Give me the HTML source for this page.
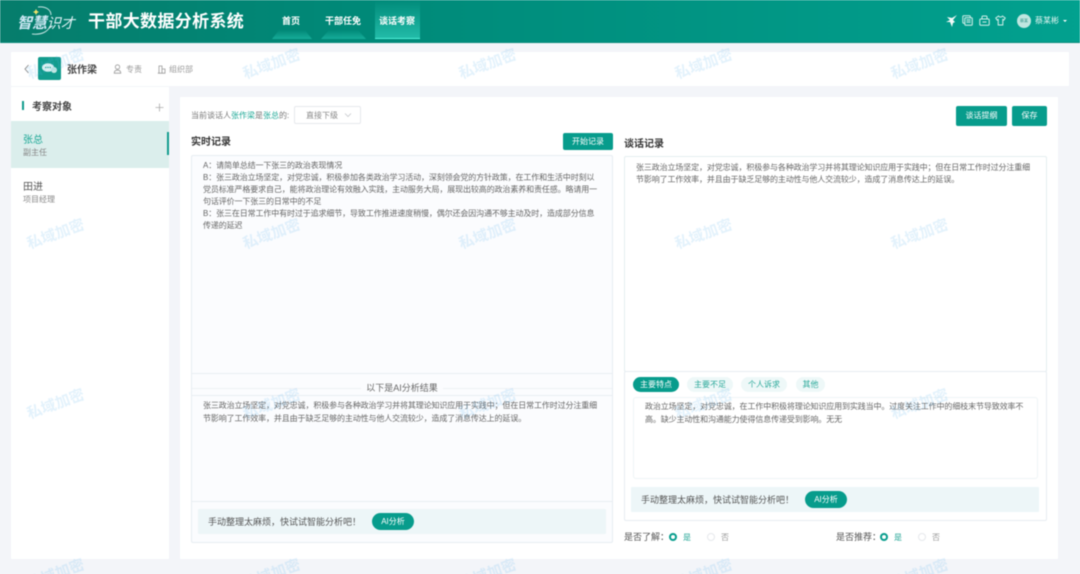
<!DOCTYPE html>
<html lang="zh-CN"><head><meta charset="utf-8"><title>干部大数据分析系统</title>
<style>
*{box-sizing:border-box;margin:0;padding:0}
html,body{width:1080px;height:574px;overflow:hidden;background:#f3f5f9}
body{position:relative;font-family:"Liberation Sans","Noto Sans CJK SC",sans-serif;color:#555}
.a{position:absolute;white-space:nowrap}
#root{position:absolute;left:0;top:0;width:1080px;height:574px;filter:blur(.45px)}
.hd{left:0;top:0;width:1080px;height:43px;background:linear-gradient(90deg,#067d6c,#008a79 35%,#02a18f);border-bottom:1px solid #0a8a7b}
.nav{top:15px;font-size:9px;color:#fff;font-weight:bold;line-height:13px}
.tp{top:30px;height:9px;background:linear-gradient(180deg,rgba(30,180,160,0) ,rgba(30,185,165,.75));clip-path:polygon(18% 0,82% 0,100% 100%,0 100%)}
.w{background:#fff}
.wm{position:absolute;width:70px;margin-left:-35px;margin-top:-10px;text-align:center;font-size:15px;font-weight:bold;color:rgba(90,175,240,.17);transform:rotate(-20deg);white-space:nowrap;line-height:20px;z-index:9}
.t{font-size:8px;line-height:12px;color:#666;letter-spacing:-.12px}
.btn{background:#079c8c;color:#fff;font-size:8px;text-align:center;border-radius:2px;line-height:20px;height:20px}
.bx{background:#fbfcfe;border:1px solid #e7edf2;border-radius:2px}
.bar{background:#edf6f8;border-radius:1px}
.pill{background:#079c8c;color:#fff;font-size:8px;text-align:center;border-radius:9px;height:17px;line-height:17px;width:42px}
.tag{height:15px;line-height:16px;border-radius:8px;background:#eef8f8;color:#2aa899;font-size:8px;text-align:center}
.h{font-size:10px;font-weight:bold;color:#333;line-height:14px}
.g{color:#1ea896}
.r{width:8px;height:8px;border-radius:50%;border:1px solid #e6e8ec;background:#fff}
.r.on{border:2.5px solid #079c8c}
</style></head><body><div id="root">

<div class="a hd"></div>
<!-- logo -->
<svg class="a" style="left:14px;top:4px" width="70" height="34" viewBox="0 0 70 34" fill="none">
<path d="M24 3c8-1 13 3 13 8" stroke="#dbeff0" stroke-width="1" opacity=".9"/>
<path d="M36 22c-2 6-9 9-18 8" stroke="#dbeff0" stroke-width="1" opacity=".9"/>
<path d="M22 5l1 2 2 1-2 1-1 2-1-2-2-1 2-1z" fill="#f4e36b"/>
</svg>
<div class="a" style="left:17px;top:15px;font-size:15px;line-height:16px;font-style:italic;font-weight:bold;color:#cfe9f6;letter-spacing:-.1px">智慧<span style="font-size:14px;font-weight:normal;color:#e4f4f8">识才</span></div>
<div class="a" style="left:88px;top:11px;font-size:17px;line-height:21px;font-weight:bold;color:#fff;letter-spacing:.35px">干部大数据分析系统</div>

<div class="a tp" style="left:272px;width:40px"></div>
<div class="a tp" style="left:321px;width:45px"></div>
<div class="a" style="left:375px;top:0;width:45px;height:39px;background:linear-gradient(180deg,rgba(40,190,170,0),#22bba8);border-bottom:1px solid #4ff0d8"></div>
<div class="a nav" style="left:282px">首页</div>
<div class="a nav" style="left:325px">干部任免</div>
<div class="a nav" style="left:379px">谈话考察</div>

<!-- header right icons -->
<svg class="a" style="left:945px;top:14px" width="13" height="14" viewBox="0 0 13 14"><path d="M12 1L7 4 2 3l3 3-4 2 4 0 2 5 1-4 2-1-2-2z" fill="#f2faf8"/></svg>
<svg class="a" style="left:962px;top:15px" width="11" height="11" viewBox="0 0 11 11" fill="none" stroke="#d4efea" stroke-width="1"><rect x=".8" y=".8" width="7.5" height="7.5" rx="1"/><rect x="2.8" y="2.8" width="7.5" height="7.5" rx="1" fill="#15a494"/><path d="M4.5 5h4M4.5 7h4"/></svg>
<svg class="a" style="left:979px;top:15px" width="11" height="11" viewBox="0 0 11 11" fill="none" stroke="#d4efea" stroke-width="1"><path d="M3 4V2a1 1 0 0 1 1-1h3a1 1 0 0 1 1 1v2"/><rect x=".8" y="4" width="9.4" height="6.2" rx="1"/><path d="M3.5 7h4"/></svg>
<svg class="a" style="left:995px;top:15px" width="11" height="11" viewBox="0 0 11 11" fill="none" stroke="#d4efea" stroke-width="1"><path d="M3.5 1L.8 3l1.2 2 1.2-.6V10h4.6V4.4L9 5l1.2-2L7.5 1C7 2.3 4 2.3 3.5 1z"/></svg>
<div class="a" style="left:1017px;top:14px;width:14px;height:14px;border-radius:50%;background:#bfe6e0;color:#2a8f83;font-size:4px;line-height:14px;text-align:center">蔡某</div>
<div class="a" style="left:1035px;top:15px;font-size:8px;line-height:12px;color:#e8f7f4">蔡某彬</div>
<div class="a" style="left:1063px;top:20px;border:2px solid transparent;border-top:2px solid #fff"></div>

<!-- top bar -->
<div class="a w" style="left:11px;top:52px;width:1058px;height:34px"></div>
<svg class="a" style="left:23px;top:64px" width="8" height="10" viewBox="0 0 8 10" fill="none" stroke="#888" stroke-width=".9"><path d="M5.5 1L2 5l3.5 4"/></svg>
<div class="a" style="left:38px;top:57px;width:23px;height:23px;border-radius:2px;background:#119c8d"></div>
<svg class="a" style="left:41px;top:62px" width="17" height="13" viewBox="0 0 17 13"><ellipse cx="7" cy="5.5" rx="6" ry="4.3" fill="#e6f6f3"/><circle cx="13" cy="8" r="3" fill="#c5e8e2"/><circle cx="4.8" cy="5.5" r=".7" fill="#119c8d"/><circle cx="7" cy="5.5" r=".7" fill="#119c8d"/><circle cx="9.2" cy="5.5" r=".7" fill="#119c8d"/></svg>
<div class="a" style="left:67px;top:64px;font-size:10px;line-height:14px;font-weight:bold;color:#444">张作梁</div>
<svg class="a" style="left:113px;top:64px" width="9" height="10" viewBox="0 0 9 10" fill="none" stroke="#999" stroke-width=".8"><circle cx="4.5" cy="3" r="2.2"/><path d="M1.2 9.2c0-2 1.2-3 3.3-3s3.3 1 3.3 3z"/></svg>
<div class="a" style="left:126px;top:64px;font-size:8px;line-height:12px;color:#999">专责</div>
<svg class="a" style="left:157px;top:64px" width="9" height="10" viewBox="0 0 9 10" fill="none" stroke="#999" stroke-width=".8"><path d="M2 9V2h3v7M5 5h3v4M.8 9.2h7.6"/></svg>
<div class="a" style="left:169px;top:64px;font-size:8px;line-height:12px;color:#999">组织部</div>

<!-- sidebar -->
<div class="a w" style="left:11px;top:87px;width:158px;height:472px"></div>
<div class="a" style="left:22px;top:101px;width:2px;height:9px;background:#119c8d"></div>
<div class="a" style="left:32px;top:101px;font-size:10px;line-height:14px;font-weight:bold;color:#444">考察对象</div>
<svg class="a" style="left:155px;top:103px" width="9" height="9" viewBox="0 0 9 9" stroke="#aaa" stroke-width=".8"><path d="M4.5 .5v8M.5 4.5h8"/></svg>
<div class="a" style="left:11px;top:121px;width:158px;height:47px;background:#dbeeec"></div>
<div class="a" style="left:167px;top:132px;width:2px;height:23px;background:#119c8d"></div>
<div class="a" style="left:23px;top:134px;font-size:10px;line-height:14px;color:#1ea896">张总</div>
<div class="a" style="left:23px;top:147px;font-size:8px;line-height:11px;color:#888">副主任</div>
<div class="a" style="left:23px;top:181px;font-size:10px;line-height:14px;color:#555">田进</div>
<div class="a" style="left:23px;top:194px;font-size:8px;line-height:11px;color:#888">项目经理</div>

<!-- main -->
<div class="a w" style="left:180px;top:97px;width:878px;height:462px"></div>
<div class="a t" style="left:191px;top:110px;color:#777;letter-spacing:0">当前谈话人<span class="g">张作梁</span>是<span class="g">张总</span>的:</div>
<div class="a" style="left:294px;top:106px;width:67px;height:18px;border:1px solid #e6e8ec;border-radius:2px;background:#fff"></div>
<div class="a t" style="left:306px;top:110px;color:#888;letter-spacing:0">直接下级</div>
<svg class="a" style="left:344px;top:112px" width="8" height="6" viewBox="0 0 8 6" fill="none" stroke="#c5c8cc" stroke-width=".8"><path d="M1 1.5l3 3 3-3"/></svg>
<div class="a btn" style="left:956px;top:106px;width:51px">谈话提纲</div>
<div class="a btn" style="left:1012px;top:106px;width:35px">保存</div>

<div class="a h" style="left:191px;top:136px">实时记录</div>
<div class="a btn" style="left:563px;top:133px;width:50px;height:17px;line-height:17px">开始记录</div>
<div class="a h" style="left:624px;top:138px">谈话记录</div>

<!-- left panel -->
<div class="a bx" style="left:191px;top:155px;width:422px;height:388px"></div>
<div class="a" style="left:192px;top:373px;width:420px;height:1px;background:#e9eef2"></div>
<div class="a t" style="left:203px;top:160px">A：请简单总结一下张三的政治表现情况</div>
<div class="a t" style="left:203px;top:172px">B：张三政治立场坚定，对党忠诚，积极参加各类政治学习活动，深刻领会党的方针政策，在工作和生活中时刻以</div>
<div class="a t" style="left:203px;top:184px">党员标准严格要求自己，能将政治理论有效融入实践，主动服务大局，展现出较高的政治素养和责任感。略请用一</div>
<div class="a t" style="left:203px;top:196px">句话评价一下张三的日常中的不足</div>
<div class="a t" style="left:203px;top:208px">B：张三在日常工作中有时过于追求细节，导致工作推进速度稍慢，偶尔还会因沟通不够主动及时，造成部分信息</div>
<div class="a t" style="left:203px;top:220px">传递的延迟</div>
<div class="a" style="left:192px;top:388px;width:420px;height:1px;background:#eef1f4"></div>
<div class="a" style="left:361px;top:382px;width:82px;height:13px;background:#fbfcfe;text-align:center;font-size:9px;line-height:13px;color:#666">以下是AI分析结果</div>
<div class="a" style="left:192px;top:395px;width:420px;height:107px;border-top:1px solid #e9eef2;border-bottom:1px solid #e9eef2"></div>
<div class="a t" style="left:203px;top:400px;line-height:12.5px">张三政治立场坚定，对党忠诚，积极参与各种政治学习并将其理论知识应用于实践中；但在日常工作时过分注重细<br>节影响了工作效率，并且由于缺乏足够的主动性与他人交流较少，造成了消息传达上的延误。</div>
<div class="a bar" style="left:198px;top:509px;width:408px;height:25px"></div>
<div class="a" style="left:208px;top:516px;font-size:9px;line-height:13px;color:#555">手动整理太麻烦，快试试智能分析吧！</div>
<div class="a pill" style="left:372px;top:513px">AI分析</div>

<!-- right panel -->
<div class="a bx" style="left:624px;top:156px;width:423px;height:216px;background:#fff;border-color:#e4eef0"></div>
<div class="a t" style="left:636px;top:162px">张三政治立场坚定，对党忠诚，积极参与各种政治学习并将其理论知识应用于实践中；但在日常工作时过分注重细<br>节影响了工作效率，并且由于缺乏足够的主动性与他人交流较少，造成了消息传达上的延误。</div>
<div class="a" style="left:624px;top:371px;width:423px;height:150px;background:#fff;border:1px solid #e7edf2;border-radius:2px"></div>
<div class="a tag" style="left:633px;top:377px;width:46px;background:#079c8c;color:#fff">主要特点</div>
<div class="a tag" style="left:687px;top:377px;width:46px">主要不足</div>
<div class="a tag" style="left:741px;top:377px;width:46px">个人诉求</div>
<div class="a tag" style="left:796px;top:377px;width:29px">其他</div>
<div class="a" style="left:633px;top:397px;width:405px;height:82px;border:1px solid #eef4f6;border-radius:3px"></div>
<div class="a t" style="left:645px;top:401px;line-height:12.8px">政治立场坚定，对党忠诚，在工作中积极将理论知识应用到实践当中。过度关注工作中的细枝末节导致效率不<br>高。缺少主动性和沟通能力使得信息传递受到影响。无无</div>
<div class="a bar" style="left:631px;top:487px;width:408px;height:25px"></div>
<div class="a" style="left:641px;top:494px;font-size:9px;line-height:13px;color:#555">手动整理太麻烦，快试试智能分析吧！</div>
<div class="a pill" style="left:805px;top:491px">AI分析</div>

<!-- radios -->
<div class="a" style="left:624px;top:531px;font-size:9px;line-height:13px;color:#555">是否了解：</div>
<div class="a r on" style="left:669px;top:533px"></div>
<div class="a t" style="left:683px;top:532px;color:#2aa899">是</div>
<div class="a r" style="left:707px;top:533px"></div>
<div class="a t" style="left:721px;top:532px;color:#999">否</div>
<div class="a" style="left:836px;top:531px;font-size:9px;line-height:13px;color:#555">是否推荐：</div>
<div class="a r on" style="left:880px;top:533px"></div>
<div class="a t" style="left:894px;top:532px;color:#2aa899">是</div>
<div class="a r" style="left:918px;top:533px"></div>
<div class="a t" style="left:932px;top:532px;color:#999">否</div>

<!-- watermarks -->
<div class="wm" style="left:56px;top:65px">私域加密</div><div class="wm" style="left:272px;top:65px">私域加密</div><div class="wm" style="left:488px;top:65px">私域加密</div><div class="wm" style="left:704px;top:65px">私域加密</div><div class="wm" style="left:920px;top:65px">私域加密</div>
<div class="wm" style="left:56px;top:235px">私域加密</div><div class="wm" style="left:272px;top:235px">私域加密</div><div class="wm" style="left:488px;top:235px">私域加密</div><div class="wm" style="left:704px;top:235px">私域加密</div><div class="wm" style="left:920px;top:235px">私域加密</div>
<div class="wm" style="left:56px;top:405px">私域加密</div><div class="wm" style="left:272px;top:405px">私域加密</div><div class="wm" style="left:488px;top:405px">私域加密</div><div class="wm" style="left:704px;top:405px">私域加密</div><div class="wm" style="left:920px;top:405px">私域加密</div>
<div class="wm" style="left:56px;top:575px">私域加密</div><div class="wm" style="left:272px;top:575px">私域加密</div><div class="wm" style="left:488px;top:575px">私域加密</div><div class="wm" style="left:704px;top:575px">私域加密</div><div class="wm" style="left:920px;top:575px">私域加密</div>
</div></body></html>
